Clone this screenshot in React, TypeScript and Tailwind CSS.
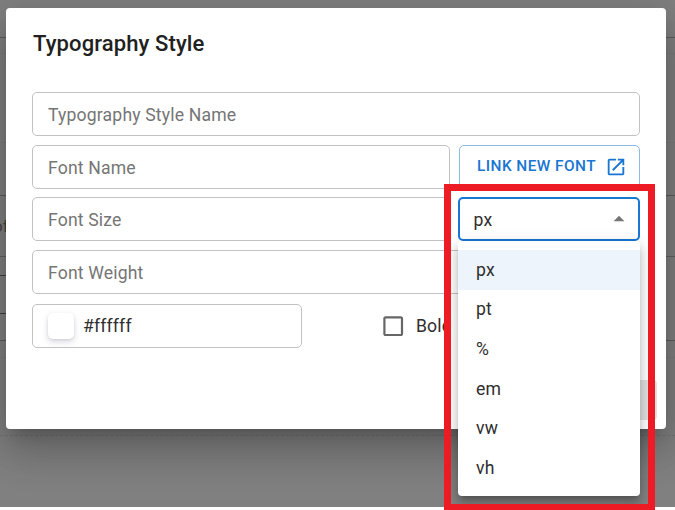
const units = ["px", "pt", "%", "em", "vw", "vh"];

function Field({ label, className = "" }: { label: string; className?: string }) {
  return (
    <div className={`flex h-11 items-center rounded-[5px] border border-[#c2c2c2] px-[15px] pt-0.5 text-[#757575] ${className}`}>
      {label}
    </div>
  );
}

function OpenInNew() {
  return (
    <svg viewBox="0 0 24 24" className="h-[22px] w-[22px]" fill="currentColor">
      <path d="M19 19H5V5h7V3H5c-1.11 0-2 .9-2 2v14c0 1.1.89 2 2 2h14c1.1 0 2-.9 2-2v-7h-2v7zM14 3v2h3.59l-9.83 9.83 1.41 1.41L19 6.41V10h2V3h-7z" />
    </svg>
  );
}

function PageBehind() {
  return (
    <div className="col-start-1 row-start-1 h-[507px] overflow-hidden bg-[#808080]">
      <div className="h-[38px] border-b border-[#5e5e5e]" />
      <div className="h-4 border-b border-[#7b7b7b]" />
      <div className="h-[89px] border-b border-[#7b7b7b]" />
      <div className="h-[53px] border-b border-[#5c5c5c]" />
      <div className="flex h-[61px] items-center border-b border-[#626262] text-[17px] text-[#4a443c]">
        <span className="-ml-[7px] tracking-normal">of</span>
      </div>
      <div className="h-[19px] w-4 border-b border-[#404040]" />
      <div className="h-[38px] w-4 border-b border-[#404040]" />
      <div className="h-[27px] border-b border-[#5c5c5c]" />
      <div className="h-[17px] border-b border-[#7b7b7b]" />
      <div className="h-[78px] border-b border-dashed border-[#747474]" />
    </div>
  );
}

function UnitMenu() {
  return (
    <ul className="absolute top-full -left-0.5 mt-0.5 h-[255px] w-[182px] rounded-[4px] bg-white pt-[9px] text-[#2e2e2e] shadow-[0_5px_5px_-3px_rgba(0,0,0,0.2),0_8px_10px_1px_rgba(0,0,0,0.14),0_3px_14px_2px_rgba(0,0,0,0.12)]">
      {units.map((unit, i) => (
        <li key={unit} className={`flex h-[39.6px] items-center pl-[18px] ${i === 0 ? "bg-[#edf4fb]" : ""}`}>{unit}</li>
      ))}
    </ul>
  );
}

function UnitSelect() {
  return (
    <div className="relative z-10 flex h-11 flex-1 items-center justify-between rounded-[5px] border-2 border-[#1976d2] pt-0.5 pr-1.5 pl-[13.5px] text-[#2e2e2e]">
      px
      <svg viewBox="0 0 24 24" className="mb-0.5 h-[26px] w-[26px]" fill="#757575">
        <path d="m7 14 5-5 5 5z" />
      </svg>
      <UnitMenu />
    </div>
  );
}

export default function App() {
  return (
    <div className="relative grid h-[510px] w-[675px] grid-cols-1 items-start overflow-hidden bg-white font-['Roboto',sans-serif] text-[17.6px] leading-6 tracking-[0.165px]">
      <PageBehind />
      <div className="col-start-1 row-start-1 h-[507px] overflow-hidden px-1.5 pt-2">
        <div className="h-[421px] w-[660px] rounded-[4px] shadow-[0_11px_15px_-7px_rgba(0,0,0,0.2),0_24px_38px_3px_rgba(0,0,0,0.14),0_9px_46px_8px_rgba(0,0,0,0.12)]">
          <div className="h-full rounded-[4px] bg-white px-[26px] pt-[18px]">
            <h2 className="h-[66px] pl-px text-[22px] leading-[35px] font-medium tracking-[0.12px] text-[#212121]">Typography Style</h2>
            <Field label="Typography Style Name" />
            <div className="mt-[9px] flex gap-[9px]">
              <Field label="Font Name" className="w-[418px]" />
              <button className="flex h-11 flex-1 items-center justify-between rounded-[5px] border border-[#8cbae8] pr-[12px] pl-[17px] text-[15.4px] font-medium tracking-[0.44px] text-[#1976d2]">
                <span className="pb-0.5">LINK NEW FONT</span>
                <OpenInNew />
              </button>
            </div>
            <div className="mt-2 flex gap-2">
              <Field label="Font Size" className="w-[418px]" />
              <UnitSelect />
            </div>
            <Field label="Font Weight" className="mt-[9px]" />
            <div className="mt-2.5 flex h-11 items-center text-[#2e2e2e]">
              <div className="flex h-11 w-[270px] items-center rounded-[5px] border border-[#c2c2c2] pl-[15px]">
                <span className="h-[26px] w-[26px] rounded-[5px] bg-white shadow-[0_3px_6px_rgba(50,50,93,0.18),0_1px_3px_rgba(0,0,0,0.08)]" />
                <span className="ml-[9px]">#ffffff</span>
              </div>
              <svg viewBox="0 0 24 24" className="ml-[78px] h-[26.4px] w-[26.4px]" fill="#666">
                <path d="M19 5v14H5V5h14m0-2H5c-1.1 0-2 .9-2 2v14c0 1.1.9 2 2 2h14c1.1 0 2-.9 2-2V5c0-1.1-.9-2-2-2z" />
              </svg>
              <span className="ml-[9.5px]">Bold</span>
            </div>
            <div className="-mr-[17px] mt-8 flex justify-end">
              <div className="h-10 w-[70px] rounded-[4px] bg-[#e0e0e0]" />
            </div>
          </div>
        </div>
      </div>
      <div className="absolute top-[184px] left-[444px] z-20 h-[326px] w-[211px] border-[7px] border-b-[6px] border-[#ed1c24]" />
    </div>
  );
}
